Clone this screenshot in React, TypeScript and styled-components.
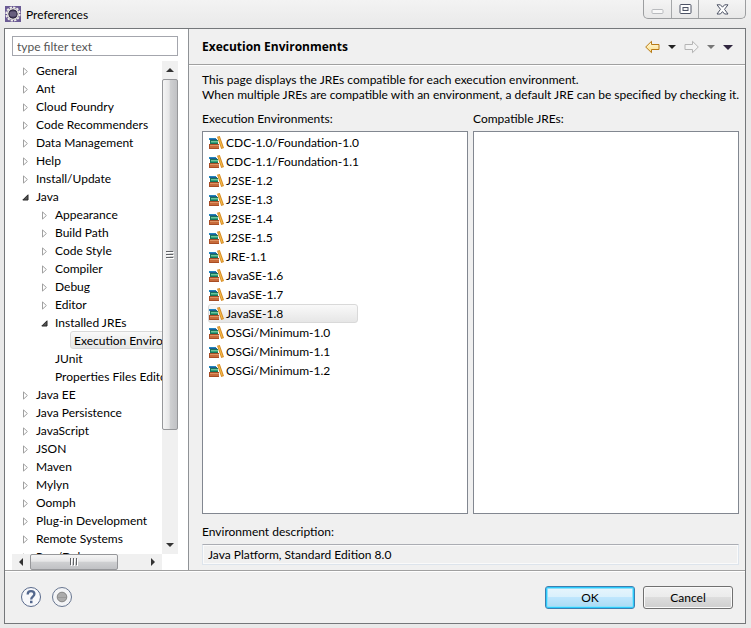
import React, { useState } from "react";
import styled, { createGlobalStyle, css } from "styled-components";

const GlobalStyle = createGlobalStyle`
  *, *::before, *::after { box-sizing: border-box; }
  body { margin: 0; }
  button, input { font: inherit; color: inherit; }
  button { padding: 0; border: 0; background: none; }
`;

const Window = styled.div`
  height: 100vh;
  padding: 0 5px 4px 4px;
  display: flex;
  flex-direction: column;
  overflow: hidden;
  background: linear-gradient(#f3f3f3, #e9e9e9 28px, #e9e9e9);
  color: #000;
  font: 12px/15px Lato, "Open Sans", sans-serif;
`;

const TitleBar = styled.header`
  flex: none;
  height: 28px;
  padding-left: 1px;
  display: flex;
  align-items: center;
  gap: 5px;
`;

const WindowTitle = styled.h1`
  flex: 1;
  margin: 0;
  font-size: 12px;
  font-weight: 400;
`;

const WindowControls = styled.div`
  align-self: flex-start;
  display: flex;
  height: 19px;
  border: 1px solid #9c9ea0;
  border-top: 0;
  border-radius: 0 0 5px 5px;
  background: linear-gradient(#f4f4f4, #e8e8e8);
  overflow: hidden;
`;

const ControlButton = styled.button<{ $wide?: boolean }>`
  width: ${(p) => (p.$wide ? 47 : 27)}px;
  display: grid;
  place-items: center;
  & + & { border-left: 1px solid #a5a7a9; }
`;

const Frame = styled.div`
  flex: 1;
  min-height: 0;
  display: flex;
  flex-direction: column;
  border: 1px solid #74777a;
  background: #f0f0f0;
`;

const Body = styled.div`
  flex: 1;
  min-height: 0;
  display: flex;
`;

const Sidebar = styled.nav`
  flex: none;
  width: 184px;
  padding: 7px 10px 0 7px;
  display: flex;
  flex-direction: column;
  gap: 5px;
  background: #fff;
  border-right: 1px solid #8f9296;
`;

const FilterInput = styled.input`
  flex: none;
  width: 100%;
  height: 20px;
  padding: 0 4px;
  border: 1px solid #a4a6ad;
  background: #fff;
  outline: none;
  &::placeholder { color: #555; opacity: 1; }
`;

const TreePane = styled.div`
  flex: 1;
  min-height: 0;
  display: grid;
  grid-template-columns: minmax(0, 1fr) 16px;
  grid-template-rows: minmax(0, 1fr) 16px;
`;

const TreeList = styled.ul`
  margin: 0;
  padding: 0;
  list-style: none;
  overflow: hidden;
`;

const TreeRow = styled.li<{ $level: number }>`
  height: 18px;
  padding-left: ${(p) => 8 + p.$level * 19}px;
  display: flex;
  align-items: center;
`;

const TreeArrow = styled.button`
  flex: none;
  width: 12px;
  height: 18px;
  padding: 2px 1px 0 0;
  display: grid;
  place-items: center;
`;

const ArrowSpace = styled.span`
  flex: none;
  width: 12px;
`;

const TreeLabel = styled.button<{ $selected?: boolean }>`
  flex: none;
  height: 18px;
  padding: 0 3px;
  border: 1px solid transparent;
  white-space: nowrap;
  text-align: left;
  ${(p) =>
    p.$selected &&
    css`
      border-color: #d9d9d9;
      border-radius: 3px;
      background: linear-gradient(#f9f9f9, #e6e6e6);
    `}
`;

const ScrollTrack = styled.div<{ $horizontal?: boolean }>`
  display: flex;
  flex-direction: ${(p) => (p.$horizontal ? "row" : "column")};
  background: #f0f0f0;
`;

const ScrollButton = styled.button`
  flex: none;
  width: 18px;
  height: 18px;
  max-width: 100%;
  max-height: 100%;
  display: grid;
  place-items: center;
`;

const ScrollThumb = styled.div<{ $horizontal?: boolean }>`
  ${(p) =>
    p.$horizontal
      ? css`
          flex: 0 1 88px;
          background: linear-gradient(#f5f5f5, #e6e6e7 45%, #cfd0d2 50%, #c0c1c4);
        `
      : css`
          flex: 0 1 351px;
          background: linear-gradient(90deg, #f5f5f5, #e6e6e7 45%, #cfd0d2 50%, #c0c1c4);
        `}
  display: grid;
  place-items: center;
  border: 1px solid #96979a;
  border-radius: 2px;
`;

const Spacer = styled.div`
  flex: 1;
`;

const Page = styled.main`
  flex: 1;
  min-width: 0;
  display: flex;
  flex-direction: column;
`;

const PageHeader = styled.div`
  flex: none;
  height: 36px;
  padding: 1px 12px 0 13px;
  display: flex;
  align-items: center;
  justify-content: space-between;
  border-bottom: 1px solid #a0a0a0;
  box-shadow: 0 1px #fff;
`;

const PageTitle = styled.h2`
  margin: 0;
  font: 700 12px/18px "Open Sans", "Noto Sans", sans-serif;
`;

const NavTools = styled.div`
  display: flex;
  align-items: center;
  gap: 8px;
`;

const ToolButton = styled.button`
  display: grid;
  place-items: center;
`;

const PageContent = styled.div`
  flex: 1;
  min-height: 0;
  padding: 7px 6px 5px 13px;
  display: flex;
  flex-direction: column;
`;

const Intro = styled.p`
  margin: 0 0 9px;
  white-space: nowrap;
`;

const Columns = styled.div`
  flex: 1;
  min-height: 0;
  display: grid;
  grid-template-columns: repeat(2, minmax(0, 1fr));
  gap: 5px;
`;

const Column = styled.section`
  min-height: 0;
  display: flex;
  flex-direction: column;
  gap: 5px;
`;

const Caption = styled.h3`
  margin: 0;
  font-size: 12px;
  font-weight: 400;
`;

const ListBox = styled.ul`
  flex: 1;
  min-height: 0;
  margin: 0;
  padding: 1px 5px;
  list-style: none;
  border: 1px solid #828790;
  background: #fff;
  overflow: hidden;
`;

const EnvironmentRow = styled.button<{ $selected: boolean }>`
  min-width: 150px;
  height: 19px;
  display: flex;
  align-items: center;
  gap: 1px;
  border: 1px solid transparent;
  border-radius: 3px;
  white-space: nowrap;
  ${(p) =>
    p.$selected &&
    css`
      border-color: #d9d9d9;
      background: linear-gradient(#f9f9f9, #e6e6e6);
    `}
`;

const Description = styled.div`
  flex: none;
  margin-top: 10px;
  display: flex;
  flex-direction: column;
  gap: 5px;
`;

const DescriptionInput = styled.input`
  width: 100%;
  height: 21px;
  padding: 0 5px;
  border: 1px solid #dde4ec;
  border-top-color: #abadb3;
  background: #f0f0f0;
  box-shadow: inset 0 0 0 1px #fafafa;
  outline: none;
`;

const Footer = styled.footer`
  flex: none;
  height: 53px;
  padding: 0 12px 0 14px;
  display: flex;
  align-items: center;
  gap: 8px;
  border-top: 1px solid #a0a0a0;
  box-shadow: inset 0 1px #fff;
`;

const RoundButton = styled.button`
  width: 23px;
  height: 22px;
  display: grid;
  place-items: center;
`;

const DialogButton = styled.button<{ $primary?: boolean }>`
  width: 90px;
  height: 23px;
  border: 1px solid ${(p) => (p.$primary ? "#3c7fb1" : "#707070")};
  border-radius: 3px;
  ${(p) =>
    p.$primary
      ? css`
          background: linear-gradient(#e8f5fc, #d9f0fc 48%, #bee6fd 50%, #a9daf3);
          box-shadow: inset 0 0 0 1px #2ccbfb, inset 0 0 0 2px #8fe0fb;
        `
      : css`
          background: linear-gradient(#f2f2f2, #ebebeb 48%, #dddddd 50%, #cfcfcf);
          box-shadow: inset 0 0 0 1px #fafafa;
        `}
`;

const EclipseIcon = () => (
  <svg width="16" height="16" viewBox="0 0 16 16" aria-hidden="true">
    <rect width="16" height="16" fill="#6a5a94" />
    <circle cx="8" cy="8" r="6.700" fill="none" stroke="#f0eeea" strokeWidth="1.800" strokeDasharray="2.300 1.200" />
    <circle cx="8" cy="8" r="5.300" fill="#3b3350" stroke="#dedcd8" strokeWidth="1.600" />
    <circle cx="8" cy="8" r="4" fill="#554b6c" stroke="#2e2740" />
    <path d="M4.500 7h7M4.500 9h7" stroke="#7d7590" />
  </svg>
);

const BooksIcon = () => (
  <svg width="16" height="15" viewBox="0 -1 16 15" aria-hidden="true">
    <path d="M0 2h7v2H0z" fill="#2385be" />
    <path d="M1 3h7v1H1z" fill="#1c5e94" />
    <path d="M1 4h8v4H1z" fill="#18745b" />
    <path d="M2 5h7v1H2z" fill="#71c49d" />
    <path d="M2 6h7v1H2z" fill="#35a57a" />
    <path d="M0 8h10v5H0z" fill="#a84d25" />
    <path d="M1 9h9v1H1z" fill="#df9565" />
    <path d="M1 10h9v2H1z" fill="#c76b3b" />
    <path d="M8 .8L10.800 0 15 12l-2.800 1z" fill="#d58b25" />
    <path d="M9.200 1.600l1-.4 3.600 10.200-1.100.4z" fill="#f7bd4b" />
  </svg>
);

const MinimizeIcon = () => (
  <svg width="13" height="13" viewBox="0 0 13 13" aria-hidden="true">
    <rect x="1" y="6.500" width="11" height="4" rx="1" fill="#f8f8f8" stroke="#b9bbbe" />
  </svg>
);

const MaximizeIcon = () => (
  <svg width="13" height="13" viewBox="0 0 13 13" aria-hidden="true">
    <rect x="1" y="1.500" width="11" height="9" rx="1" fill="#fff" stroke="#4d5365" />
    <rect x="4" y="4.500" width="5" height="3" fill="#f3f3f3" stroke="#4d5365" />
  </svg>
);

const CloseIcon = () => (
  <svg width="13" height="11" viewBox="0 0 13 11" aria-hidden="true">
    <path
      d="M1 .8h3.400l2.100 2.400L8.600 .8H12L8.500 5.300 12 10H8.600L6.500 7.600 4.400 10H1L4.500 5.300z"
      fill="#fff"
      stroke="#4d5365"
      strokeLinejoin="round"
    />
  </svg>
);

const CollapsedIcon = () => (
  <svg width="7" height="9" viewBox="0 0 7 9" aria-hidden="true">
    <path d="M1.500 .9v7.200L5.400 4.500z" fill="#fff" stroke="#a0a0a0" />
  </svg>
);

const ExpandedIcon = () => (
  <svg width="7" height="7" viewBox="0 0 7 7" aria-hidden="true">
    <path d="M6 .8V6H.8z" fill="#555" stroke="#262626" strokeLinejoin="round" />
  </svg>
);

const NavArrow = ({ forward }: { forward?: boolean }) => (
  <svg width="15" height="14" viewBox="0.500 0 15 14" aria-hidden="true">
    <defs>
      <linearGradient id="backFill" x1="0" y1="0" x2="0" y2="1">
        <stop offset="0" stopColor="#fffbe2" />
        <stop offset="1" stopColor="#fbdc83" />
      </linearGradient>
    </defs>
    {forward ? (
      <path d="M14.800 7L9 1.300V4.500H1.500v5H9v3.200z" fill="#f4f4f4" stroke="#b4b4b4" strokeLinejoin="round" />
    ) : (
      <path d="M1.200 7L7 1.300V4.500h7.500v5H7v3.200z" fill="url(#backFill)" stroke="#b87a16" strokeLinejoin="round" />
    )}
  </svg>
);

const paths = {
  down: "M0 0h8L4 4z",
  up: "M0 4h8L4 0z",
  left: "M4 0v8L0 4z",
  right: "M0 0v8l4-4z",
};

const Triangle = ({ to, color = "#333", size = 8 }: { to: keyof typeof paths; color?: string; size?: number }) => {
  const vertical = to === "up" || to === "down";
  return (
    <svg
      width={vertical ? size : size / 2}
      height={vertical ? size / 2 : size}
      viewBox={vertical ? "0 0 8 4" : "0 0 4 8"}
      aria-hidden="true"
    >
      <path d={paths[to]} fill={color} />
    </svg>
  );
};

const Grip = ({ horizontal }: { horizontal?: boolean }) => (
  <svg width="8" height="8" viewBox="0 0 8 8" aria-hidden="true">
    <path d={horizontal ? "M.5 0v7M3.500 0v7M6.500 0v7" : "M0 .5h7M0 3.500h7M0 6.500h7"} stroke="#606266" />
    <path d={horizontal ? "M1.500 1v7M4.500 1v7M7.500 1v7" : "M1 1.500h7M1 4.500h7M1 7.500h7"} stroke="#fff" />
  </svg>
);

const HelpIcon = () => (
  <svg width="22" height="22" viewBox="0 0 22 22" aria-hidden="true">
    <circle cx="11" cy="11" r="9.500" fill="#f7f8fb" stroke="#596a8c" />
    <path d="M7.700 8.400C7.700 6.200 9 5.200 11 5.200s3.400 1.100 3.400 2.900c0 2.500-3.200 2.600-3.200 5.300" fill="none" stroke="#53678d" strokeWidth="2.300" />
    <rect x="10" y="14.700" width="2.500" height="2.500" fill="#53678d" />
  </svg>
);

const RecordIcon = () => (
  <svg width="22" height="22" viewBox="0 0 22 22" aria-hidden="true">
    <circle cx="11" cy="11" r="9.500" fill="#f3f4f6" stroke="#687690" />
    <circle cx="11" cy="11" r="4.800" fill="#ababab" stroke="#858585" />
    <path d="M7 11.500h8" stroke="#999" />
  </svg>
);

type Node = { label: string; level?: number; state?: "open" | "closed" };

const nodes: Node[] = [
  { label: "General", state: "closed" },
  { label: "Ant", state: "closed" },
  { label: "Cloud Foundry", state: "closed" },
  { label: "Code Recommenders", state: "closed" },
  { label: "Data Management", state: "closed" },
  { label: "Help", state: "closed" },
  { label: "Install/Update", state: "closed" },
  { label: "Java", state: "open" },
  { label: "Appearance", level: 1, state: "closed" },
  { label: "Build Path", level: 1, state: "closed" },
  { label: "Code Style", level: 1, state: "closed" },
  { label: "Compiler", level: 1, state: "closed" },
  { label: "Debug", level: 1, state: "closed" },
  { label: "Editor", level: 1, state: "closed" },
  { label: "Installed JREs", level: 1, state: "open" },
  { label: "Execution Environments", level: 2 },
  { label: "JUnit", level: 1 },
  { label: "Properties Files Editor", level: 1 },
  { label: "Java EE", state: "closed" },
  { label: "Java Persistence", state: "closed" },
  { label: "JavaScript", state: "closed" },
  { label: "JSON", state: "closed" },
  { label: "Maven", state: "closed" },
  { label: "Mylyn", state: "closed" },
  { label: "Oomph", state: "closed" },
  { label: "Plug-in Development", state: "closed" },
  { label: "Remote Systems", state: "closed" },
  { label: "Run/Debug", state: "closed" },
];

const environments = [
  "CDC-1.0/Foundation-1.0",
  "CDC-1.1/Foundation-1.1",
  "J2SE-1.2",
  "J2SE-1.3",
  "J2SE-1.4",
  "J2SE-1.5",
  "JRE-1.1",
  "JavaSE-1.6",
  "JavaSE-1.7",
  "JavaSE-1.8",
  "OSGi/Minimum-1.0",
  "OSGi/Minimum-1.1",
  "OSGi/Minimum-1.2",
];

export default function App() {
  const [environment, setEnvironment] = useState("JavaSE-1.8");
  const [page, setPage] = useState("Execution Environments");

  return (
    <Window>
      <GlobalStyle />
      <TitleBar>
        <EclipseIcon />
        <WindowTitle>Preferences</WindowTitle>
        <WindowControls>
          <ControlButton aria-label="Minimize"><MinimizeIcon /></ControlButton>
          <ControlButton aria-label="Maximize"><MaximizeIcon /></ControlButton>
          <ControlButton $wide aria-label="Close"><CloseIcon /></ControlButton>
        </WindowControls>
      </TitleBar>
      <Frame>
        <Body>
          <Sidebar aria-label="Preference pages">
            <FilterInput type="text" aria-label="Filter" placeholder="type filter text" />
            <TreePane>
              <TreeList>
                {nodes.map(({ label, level = 0, state }) => (
                  <TreeRow key={label} $level={level}>
                    {state ? (
                      <TreeArrow aria-label={`Toggle ${label}`} aria-expanded={state === "open"}>
                        {state === "open" ? <ExpandedIcon /> : <CollapsedIcon />}
                      </TreeArrow>
                    ) : (
                      <ArrowSpace />
                    )}
                    <TreeLabel $selected={label === page} onClick={() => setPage(label)}>
                      {label}
                    </TreeLabel>
                  </TreeRow>
                ))}
              </TreeList>
              <ScrollTrack>
                <ScrollButton aria-label="Scroll up"><Triangle to="up" /></ScrollButton>
                <ScrollThumb><Grip /></ScrollThumb>
                <Spacer />
                <ScrollButton aria-label="Scroll down"><Triangle to="down" /></ScrollButton>
              </ScrollTrack>
              <ScrollTrack $horizontal>
                <ScrollButton aria-label="Scroll left"><Triangle to="left" /></ScrollButton>
                <ScrollThumb $horizontal><Grip horizontal /></ScrollThumb>
                <Spacer />
                <ScrollButton aria-label="Scroll right"><Triangle to="right" /></ScrollButton>
              </ScrollTrack>
            </TreePane>
          </Sidebar>
          <Page>
            <PageHeader>
              <PageTitle>Execution Environments</PageTitle>
              <NavTools>
                <ToolButton aria-label="Back"><NavArrow /></ToolButton>
                <ToolButton aria-label="Back history"><Triangle to="down" color="#222" /></ToolButton>
                <ToolButton aria-label="Forward"><NavArrow forward /></ToolButton>
                <ToolButton aria-label="Forward history"><Triangle to="down" color="#777" /></ToolButton>
                <ToolButton aria-label="Page menu"><Triangle to="down" color="#30263f" size={10} /></ToolButton>
              </NavTools>
            </PageHeader>
            <PageContent>
              <Intro>
                This page displays the JREs compatible for each execution environment.
                <br />
                When multiple JREs are compatible with an environment, a default JRE can be specified by checking it.
              </Intro>
              <Columns>
                <Column>
                  <Caption>Execution Environments:</Caption>
                  <ListBox>
                    {environments.map((name) => (
                      <li key={name}>
                        <EnvironmentRow
                          $selected={name === environment}
                          aria-pressed={name === environment}
                          onClick={() => setEnvironment(name)}
                        >
                          <BooksIcon />
                          {name}
                        </EnvironmentRow>
                      </li>
                    ))}
                  </ListBox>
                </Column>
                <Column>
                  <Caption>Compatible JREs:</Caption>
                  <ListBox />
                </Column>
              </Columns>
              <Description>
                <label htmlFor="environment-description">Environment description:</label>
                <DescriptionInput
                  id="environment-description"
                  type="text"
                  readOnly
                  value="Java Platform, Standard Edition 8.0"
                />
              </Description>
            </PageContent>
          </Page>
        </Body>
        <Footer>
          <RoundButton aria-label="Help"><HelpIcon /></RoundButton>
          <RoundButton aria-label="Record preferences"><RecordIcon /></RoundButton>
          <Spacer />
          <DialogButton $primary>OK</DialogButton>
          <DialogButton>Cancel</DialogButton>
        </Footer>
      </Frame>
    </Window>
  );
}
